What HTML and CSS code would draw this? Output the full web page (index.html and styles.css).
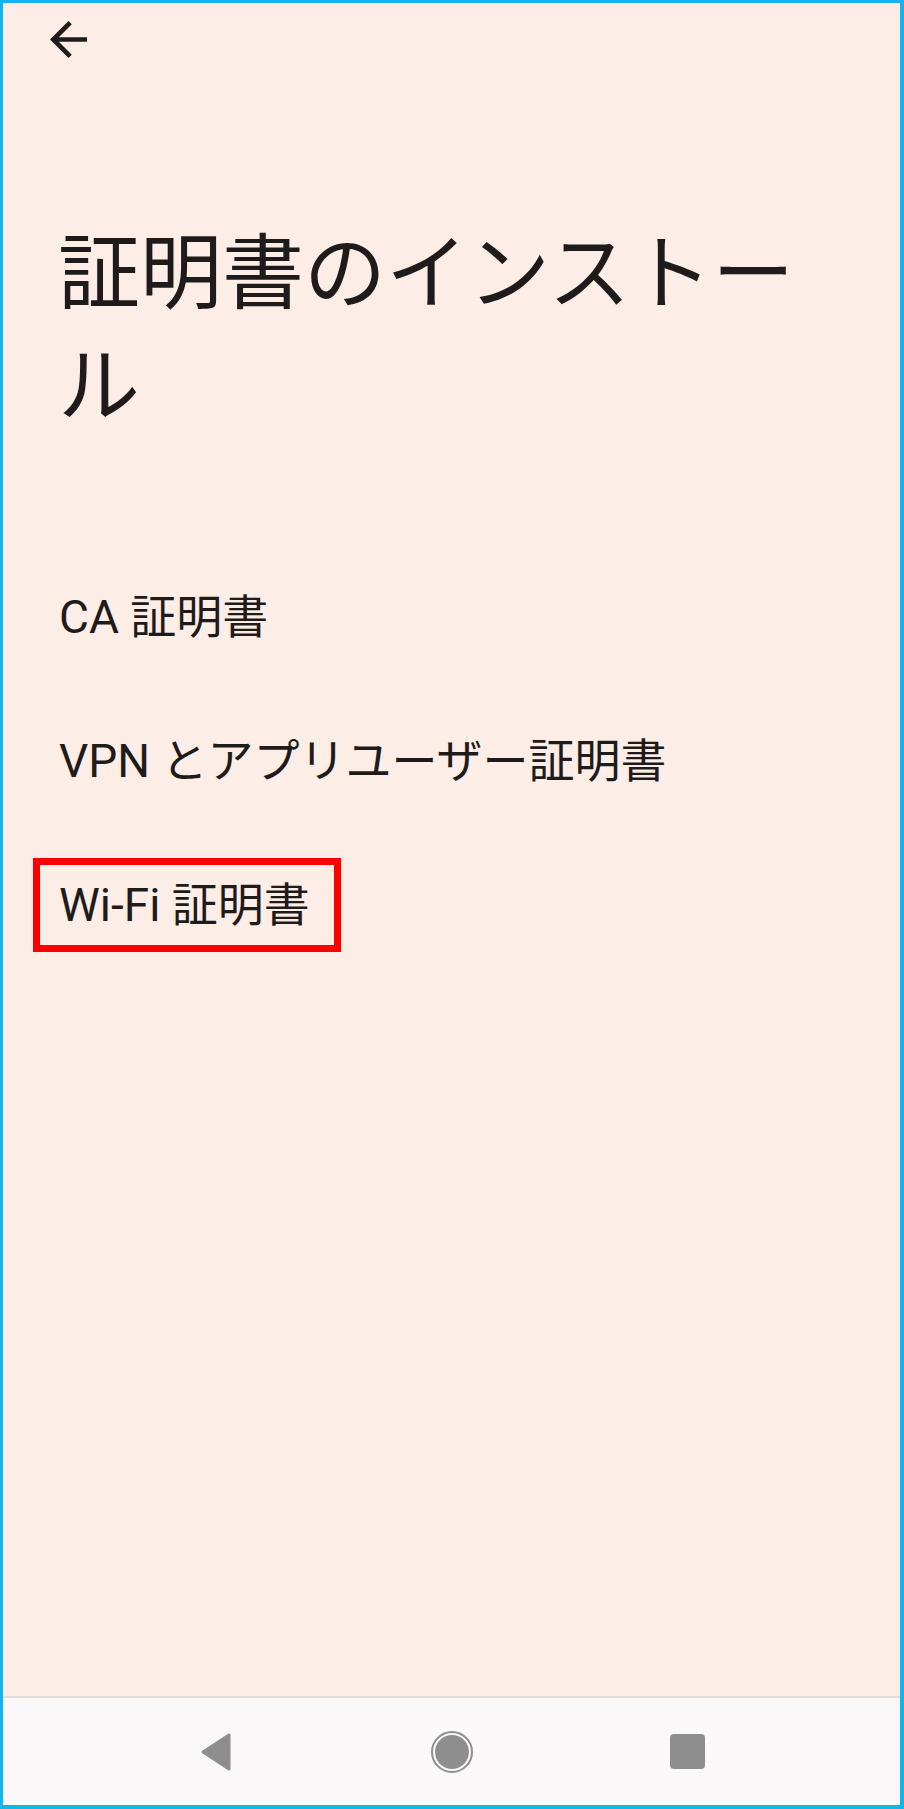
FILE: index.html
```html
<!DOCTYPE html>
<html lang="ja">
<head>
<meta charset="utf-8">
<title>証明書のインストール</title>
<link rel="stylesheet" href="styles.css">
</head>
<body>
<div class="screen">
  <div class="topbar">
    <svg class="back" viewBox="4 4 16 16" width="37" height="37" aria-label="戻る">
      <path d="M20 11H7.83l5.59-5.59L12 4l-8 8 8 8 1.41-1.41L7.83 13H20v-2z" fill="#1f1b1a"/>
    </svg>
  </div>
  <h1 class="title">証明書のインストール</h1>
  <ul class="list">
    <li class="item"><span class="label">CA 証明書</span></li>
    <li class="item"><span class="label">VPN とアプリユーザー証明書</span></li>
    <li class="item"><span class="label highlight">Wi-Fi 証明書</span></li>
  </ul>
  <div class="navbar">
    <div class="nav-btn">
      <svg viewBox="0 0 34 40" width="34" height="40">
        <path d="M30 3 L30 37 L4 20 Z" fill="#8e8e8e" stroke="#8e8e8e" stroke-width="3" stroke-linejoin="round"/>
      </svg>
    </div>
    <div class="nav-btn">
      <svg viewBox="0 0 44 44" width="44" height="44">
        <circle cx="22" cy="22" r="20" fill="none" stroke="#8e8e8e" stroke-width="2"/>
        <circle cx="22" cy="22" r="17" fill="#8e8e8e"/>
      </svg>
    </div>
    <div class="nav-btn">
      <div class="square"></div>
    </div>
  </div>
</div>
</body>
</html>
```
FILE: styles.css
```css
html, body {
  margin: 0;
  padding: 0;
  background: #fcede7;
}

.screen {
  width: 904px;
  height: 1809px;
  box-sizing: border-box;
  border: 3px solid #12b5ee;
  border-right-width: 4px;
  border-bottom-width: 4px;
  background: #fcede7;
  display: flex;
  flex-direction: column;
  font-family: Roboto, "Noto Sans CJK JP", sans-serif;
  color: #1f1b1a;
}

.topbar {
  height: 64px;
  padding-left: 47px;
  padding-top: 18px;
  box-sizing: border-box;
}

.back {
  display: block;
}

.title {
  margin: 0;
  padding: 143px 54px 0 55px;
  font-family: "Noto Sans CJK JP", sans-serif;
  font-weight: 400;
  font-size: 82px;
  line-height: 113px;
}

.list {
  list-style: none;
  margin: 109px 0 0 0;
  padding: 0 54px 0 56px;
}

.item {
  height: 144px;
  display: flex;
  align-items: center;
  font-size: 46px;
}

.label {
  line-height: 60px;
}

.highlight {
  border: 7px solid #ff0000;
  padding: 10px 24px 10px 19px;
  margin-left: -26px;
}

.navbar {
  margin-top: auto;
  height: 109px;
  box-sizing: border-box;
  border-top: 2px solid #e4dcd9;
  background: #faf8f8;
  display: flex;
  justify-content: center;
  align-items: center;
  gap: 176px;
}

.nav-btn {
  width: 60px;
  height: 60px;
  display: flex;
  align-items: center;
  justify-content: center;
}

.square {
  width: 35px;
  height: 35px;
  border-radius: 4px;
  background: #8e8e8e;
}
```
